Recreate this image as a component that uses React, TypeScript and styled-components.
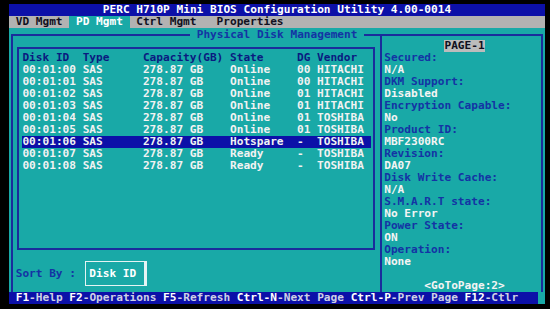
import React from "react";
import styled, { createGlobalStyle } from "styled-components";

const CYAN = "#19a9a7";
const BLUE = "#0c10a8";
const LINE = "#1a2c9c";
const LABEL = "#1434a4";

const GlobalStyle = createGlobalStyle`
  html, body {
    margin: 0;
    padding: 0;
    background: #000;
  }
  body {
    width: 550px;
    height: 309px;
    overflow: hidden;
  }
`;

const Screen = styled.div`
  width: 536px;
  height: 300px;
  margin: 4px 0 0 9px;
  font-family: "DejaVu Sans Mono", "Liberation Mono", monospace;
  font-size: 11.13px;
  font-weight: bold;
  line-height: 12px;
  white-space: pre;
  color: #f2f2f2;
`;

const TitleBar = styled.div`
  height: 12px;
  background: ${BLUE};
  color: #fff;
  text-align: center;
`;

const MenuBar = styled.div`
  display: flex;
  height: 12px;
  background: #b2b2b2;
  color: #101020;
`;

const Tab = styled.div<{ $active?: boolean; $gap?: boolean }>`
  padding: 0 1ch;
  margin-left: ${(p) => (p.$gap ? "1ch" : "0")};
  background: ${(p) => (p.$active ? CYAN : "transparent")};
  color: ${(p) => (p.$active ? "#fff" : "#101020")};
`;

const Main = styled.div`
  height: 264px;
  box-sizing: border-box;
  padding-top: 6px;
  background: ${CYAN};
`;

const Frame = styled.div`
  position: relative;
  box-sizing: border-box;
  height: 258px;
  margin: 0 2px;
  border: 2px solid ${LINE};
  border-bottom: none;
  display: grid;
  grid-template-columns: 367px 1fr;
`;

const FrameLabel = styled.div`
  position: absolute;
  top: -7px;
  left: 177px;
  padding: 0 1ch;
  background: ${CYAN};
  color: ${LABEL};
`;

const LeftPanel = styled.div`
  display: flex;
  flex-direction: column;
`;

const TableBox = styled.div`
  box-sizing: border-box;
  width: 358px;
  height: 203px;
  margin: 11px 0 0 4px;
  padding: 3px 0 0 3.4px;
  border: 2px solid ${LINE};
`;

const TableRow = styled.div<{ $head?: boolean; $selected?: boolean }>`
  display: grid;
  grid-template-columns: 9ch 9ch 13ch 10ch 3ch 8ch;
  width: 52ch;
  height: 12px;
  background: ${(p) => (p.$selected ? BLUE : "transparent")};
  color: ${(p) => (p.$head ? "#0a1a80" : "#f2f2f2")};
`;

const SortRow = styled.div`
  display: flex;
  align-items: center;
  margin-top: 11px;
  padding-left: 2.7px;
  height: 25px;
`;

const SortLabel = styled.span`
  color: ${LABEL};
`;

const SortButton = styled.div`
  box-sizing: border-box;
  width: 62px;
  height: 25px;
  margin-left: 9px;
  padding: 6px 0 0 3.4px;
  border: 1px solid #e4f4f4;
  border-right-width: 3px;
  color: #fff;
`;

const RightPanel = styled.div`
  display: flex;
  flex-direction: column;
  border-left: 2px solid ${LINE};
  padding: 4px 0 0 2.2px;
`;

const PageTag = styled.div`
  align-self: flex-start;
  margin-left: 9ch;
  background: #bcbcbc;
  color: #101020;
`;

const InfoLabel = styled.div`
  color: ${LABEL};
`;

const InfoValue = styled.div`
  color: #f4f4f4;
`;

const GoToPage = styled.div`
  margin-top: auto;
  margin-left: 6ch;
  color: #f4f4f4;
`;

const StatusRow = styled.div`
  display: flex;
  height: 12px;
`;

const StatusBar = styled.div`
  width: 79ch;
  padding-left: 1ch;
  box-sizing: border-box;
  background: ${BLUE};
  color: #cfd0e6;
`;

const StatusEnd = styled.div`
  flex: 1;
  background: ${CYAN};
`;

const Key = styled.span`
  color: #fff;
`;

const disks = [
  ["00:01:00", "Online", "00", "HITACHI"],
  ["00:01:01", "Online", "00", "HITACHI"],
  ["00:01:02", "Online", "01", "HITACHI"],
  ["00:01:03", "Online", "01", "HITACHI"],
  ["00:01:04", "Online", "01", "TOSHIBA"],
  ["00:01:05", "Online", "01", "TOSHIBA"],
  ["00:01:06", "Hotspare", "-", "TOSHIBA"],
  ["00:01:07", "Ready", "-", "TOSHIBA"],
  ["00:01:08", "Ready", "-", "TOSHIBA"],
];

const info = [
  ["Secured:", "N/A"],
  ["DKM Support:", "Disabled"],
  ["Encryption Capable:", "No"],
  ["Product ID:", "MBF2300RC"],
  ["Revision:", "DA07"],
  ["Disk Write Cache:", "N/A"],
  ["S.M.A.R.T state:", "No Error"],
  ["Power State:", "ON"],
  ["Operation:", "None"],
];

const keys = [
  ["F1", "-Help"],
  ["F2", "-Operations"],
  ["F5", "-Refresh"],
  ["Ctrl-N", "-Next Page"],
  ["Ctrl-P", "-Prev Page"],
  ["F12", "-Ctlr"],
];

export default function App() {
  return (
    <>
      <GlobalStyle />
      <Screen>
        <TitleBar>PERC H710P Mini BIOS Configuration Utility 4.00-0014</TitleBar>
        <MenuBar>
          <Tab>VD Mgmt</Tab>
          <Tab $active>PD Mgmt</Tab>
          <Tab>Ctrl Mgmt</Tab>
          <Tab $gap>Properties</Tab>
        </MenuBar>
        <Main>
          <Frame>
            <FrameLabel>Physical Disk Management</FrameLabel>
            <LeftPanel>
              <TableBox>
                <TableRow $head>
                  <span>Disk ID</span>
                  <span>Type</span>
                  <span>Capacity(GB)</span>
                  <span>State</span>
                  <span>DG</span>
                  <span>Vendor</span>
                </TableRow>
                {disks.map((d, i) => (
                  <TableRow key={d[0]} $selected={i === 6}>
                    <span>{d[0]}</span>
                    <span>SAS</span>
                    <span>278.87 GB</span>
                    <span>{d[1]}</span>
                    <span>{d[2]}</span>
                    <span>{d[3]}</span>
                  </TableRow>
                ))}
              </TableBox>
              <SortRow>
                <SortLabel>Sort By :</SortLabel>
                <SortButton>Disk ID</SortButton>
              </SortRow>
            </LeftPanel>
            <RightPanel>
              <PageTag>PAGE-1</PageTag>
              {info.map(([label, value]) => (
                <React.Fragment key={label}>
                  <InfoLabel>{label}</InfoLabel>
                  <InfoValue>{value}</InfoValue>
                </React.Fragment>
              ))}
              <GoToPage>&lt;GoToPage:2&gt;</GoToPage>
            </RightPanel>
          </Frame>
        </Main>
        <StatusRow>
          <StatusBar>
            {keys.map(([k, rest], i) => (
              <span key={k}>
                <Key>{k}</Key>
                {rest}
                {i < keys.length - 1 ? " " : ""}
              </span>
            ))}
          </StatusBar>
          <StatusEnd />
        </StatusRow>
      </Screen>
    </>
  );
}
